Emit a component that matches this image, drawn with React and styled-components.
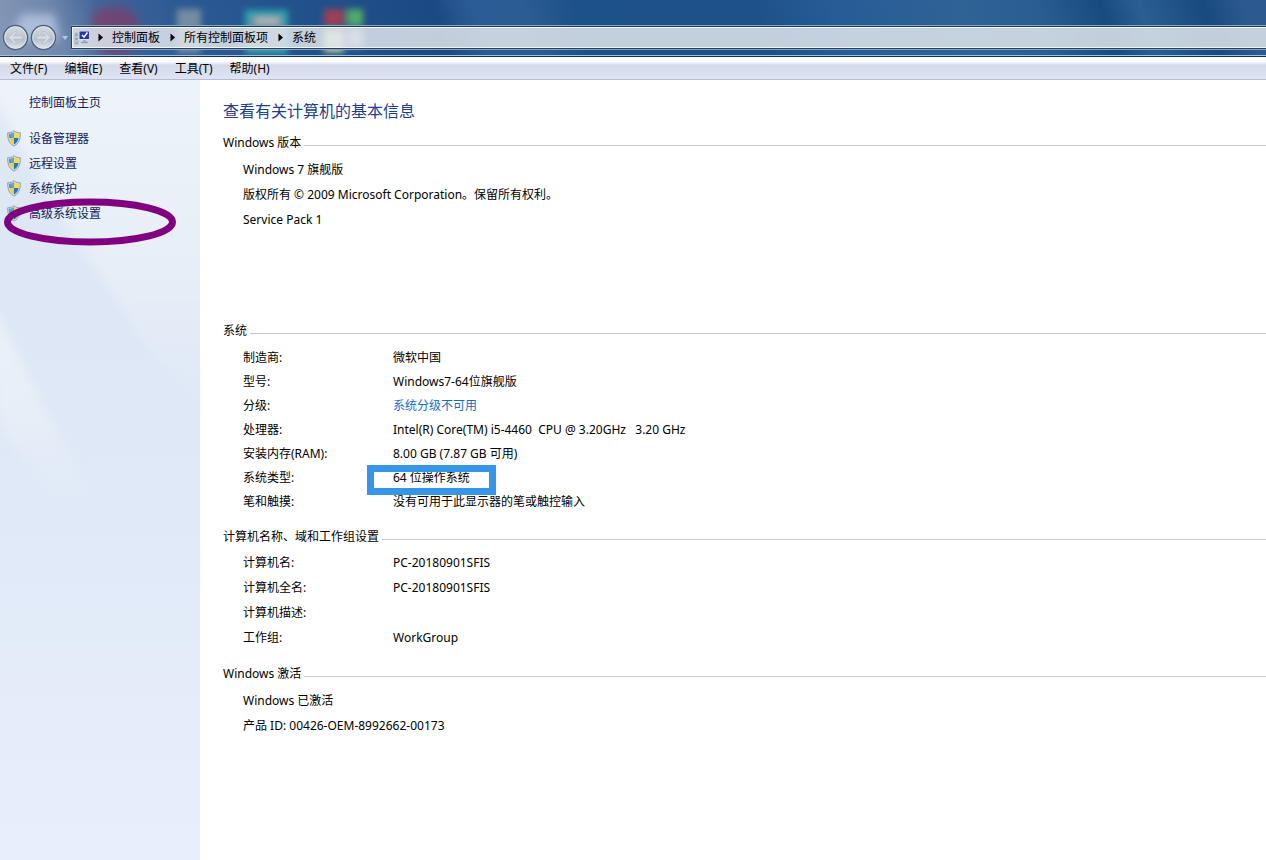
import React from "react";
import styled, { createGlobalStyle } from "styled-components";

const GlobalStyle = createGlobalStyle`
  *, *::before, *::after { box-sizing: border-box; }
  body {
    margin: 0;
    background: #fff;
    color: #000;
    font-family: "Noto Sans", "Noto Sans CJK SC", sans-serif;
    font-size: 12px;
    line-height: 24px;
  }
  button { font: inherit; color: inherit; border: 0; background: none; cursor: pointer; }
  a { text-decoration: none; }
`;

const Window = styled.div`
  display: flex;
  flex-direction: column;
  min-height: 100vh;
`;

const TitleBar = styled.header`
  position: relative;
  display: flex;
  align-items: center;
  height: 57px;
  padding: 19px 0 0 2px;
  overflow: hidden;
  border-bottom: 1px solid #12305a;
  box-shadow: inset 0 -1px #9fc3e2;
  background: linear-gradient(
    72deg,
    #8798b6 0%, #7088ad 5%, #41659a 9%, #2d5a94 15%, #22528c 24%, #1b4984 35%,
    #2c5c95 38%, #2c5c94 42%, #1d5189 46%, #1e5189 60%, #265c97 66%, #2f6396 76%,
    #2a5e92 82%, #184b80 87%, #2b5f94 90%, #18497f 95%, #2c5a90 98%
  );
`;

const Glass = styled.svg`
  position: absolute;
  top: 0;
  left: 0;
`;

const NavButtons = styled.nav`
  position: relative;
  display: flex;
  align-items: center;
  gap: 1px;
  height: 27px;
`;

const NavButton = styled.button`
  display: flex;
  padding: 0;
`;

const RecentButton = styled.button`
  display: flex;
  align-items: center;
  justify-content: center;
  width: 13px;
  height: 26px;
  padding: 0;
`;

const AddressBar = styled.div`
  position: relative;
  flex: 1;
  display: flex;
  align-items: center;
  height: 23px;
  padding-left: 2px;
  border: 1px solid #234163;
  border-right: 0;
  box-shadow:
    inset 1px 0 #edf5f9, inset 0 1px #edf5f9, inset 0 -1px #edf5f9,
    0 -1px #8ba3b8, 0 1px #8ba3b8;
  background: rgba(226, 231, 237, 0.84);
`;

const Location = styled.svg`
  flex: none;
  margin-right: -2px;
`;

const Crumb = styled.button`
  padding: 0;
`;

const CrumbArrow = styled.svg`
  width: 24px;
  height: 9px;
  flex: none;
`;

const MenuBar = styled.nav`
  display: flex;
  gap: 1px;
  height: 23px;
  padding: 0 2px;
  border-bottom: 1px solid #b5bdd2;
  background: linear-gradient(#fff 0, #fff 3px, #f3f4fa 5px, #e4e8f3 7px, #d5daea 8px, #dee4f3 22px);
`;

const MenuItem = styled.button`
  padding: 0 8px;
`;

const Content = styled.div`
  flex: 1;
  display: flex;
`;

const Sidebar = styled.aside`
  position: relative;
  flex: none;
  width: 200px;
  padding: 11px 7px;
  overflow: hidden;
  background: linear-gradient(#dfe9f5, #dde7f5 30%, #e0e9f7 55%, #e4ecfa 75%, #e7effd);
`;

const Beams = styled.svg`
  position: absolute;
  top: 0;
  left: 0;
`;

const SideNav = styled.nav`
  position: relative;
  display: flex;
  flex-direction: column;
`;

const HomeLink = styled.a`
  padding-left: 22px;
  margin-bottom: 11px;
  color: #15215a;
`;

const TaskLink = styled.a`
  position: relative;
  display: flex;
  align-items: center;
  gap: 8px;
  height: 25px;
  color: #15215a;
`;

const EllipseMark = styled.svg`
  position: absolute;
  top: -3px;
  left: -4px;
  pointer-events: none;
`;

const Main = styled.main`
  flex: 1;
  min-width: 0;
  padding: 19px 0 40px 23px;
`;

const PageTitle = styled.h1`
  margin: 0 0 8px;
  font-size: 16px;
  font-weight: 400;
  line-height: 24px;
  color: #1c3f8f;
`;

const Section = styled.section`
  padding-bottom: ${(p) => (p.$roomy ? 87 : 11)}px;
`;

const SectionHeading = styled.h2`
  display: flex;
  align-items: center;
  gap: 3px;
  margin: 0 0 2px;
  font-size: 12px;
  font-weight: 400;
  line-height: 24px;

  &::after {
    content: "";
    flex: 1;
    height: 1px;
    margin-top: 5px;
    background: #c6c9cc;
  }
`;

const Line = styled.p`
  margin: 0;
  padding-left: 20px;
  line-height: 25px;
`;

const Facts = styled.dl`
  display: grid;
  grid-template-columns: 150px 1fr;
  grid-auto-rows: ${(p) => (p.$dense ? 24 : 25)}px;
  margin: 0;
  padding: ${(p) => (p.$dense ? 1 : 0)}px 0 0 20px;
  dd { margin: 0; white-space: pre; }
  a { color: #1a6ac4; }
`;

const Boxed = styled.span`
  position: relative;

  &::after {
    content: "";
    position: absolute;
    top: -4px;
    left: -26px;
    width: 129px;
    height: 30px;
    border: 7px solid #3696e6;
    pointer-events: none;
  }
`;

const menus = ["文件(F)", "编辑(E)", "查看(V)", "工具(T)", "帮助(H)"];
const crumbs = ["控制面板", "所有控制面板项", "系统"];
const tasks = ["设备管理器", "远程设置", "系统保护", "高级系统设置"];

const systemFacts = [
  ["制造商:", "微软中国"],
  ["型号:", "Windows7-64位旗舰版"],
  ["分级:", <a href="#rating">系统分级不可用</a>],
  ["处理器:", "Intel(R) Core(TM) i5-4460  CPU @ 3.20GHz   3.20 GHz"],
  ["安装内存(RAM):", "8.00 GB (7.87 GB 可用)"],
  ["系统类型:", <Boxed>64 位操作系统</Boxed>],
  ["笔和触摸:", "没有可用于此显示器的笔或触控输入"],
];

const networkFacts = [
  ["计算机名:", "PC-20180901SFIS"],
  ["计算机全名:", "PC-20180901SFIS"],
  ["计算机描述:", ""],
  ["工作组:", "WorkGroup"],
];

function DesktopGlow() {
  return (
    <Glass width="400" height="55" aria-hidden="true">
      <defs>
        <filter id="soft" x="-30%" y="-30%" width="160%" height="160%">
          <feGaussianBlur stdDeviation="3" />
        </filter>
        <filter id="softer" x="-40%" y="-40%" width="180%" height="180%">
          <feGaussianBlur stdDeviation="5" />
        </filter>
      </defs>
      <g filter="url(#softer)">
        <path d="M22 14h32l6 26H8z" fill="#b9c8e4" opacity=".8" />
        <path d="M92 14l12-7h22l12 12v22l-12 14h-22l-14-14z" fill="#8a3760" opacity=".65" />
      </g>
      <g filter="url(#soft)">
        <path d="M177 9h24v44h-24z" fill="#8b9da7" opacity=".75" />
        <path d="M248 13h37v38h-37z" fill="#6c8897" stroke="#2ba3ae" strokeWidth="6" />
        <path d="M255 18h24v6h-24z" fill="#b7bcc0" />
        <path d="M324 9h20v17h-20z" fill="#9b3f55" />
        <path d="M347 9h16v17h-16z" fill="#4fab6a" />
        <path d="M324 30h20v22h-20z" fill="#c9d8a0" />
        <path d="M347 30h16v17h-16z" fill="#a9a9cf" />
      </g>
    </Glass>
  );
}

function NavGlyph({ forward }) {
  const id = forward ? "orbF" : "orbB";
  return (
    <svg width="27" height="27" viewBox="0 0 27 27" aria-hidden="true">
      <defs>
        <linearGradient id={id} x2="0" y2="1">
          <stop offset="0" stopColor="#d3dae1" />
          <stop offset=".48" stopColor="#bfc8d1" />
          <stop offset=".56" stopColor="#b3bec9" />
          <stop offset="1" stopColor="#e1e8ec" />
        </linearGradient>
      </defs>
      <circle cx="13.5" cy="13.5" r="12" fill={`url(#${id})`} stroke="#4b617d" strokeWidth="1.4" />
      <circle cx="13.5" cy="13.5" r="10.8" fill="none" stroke="#e6ecf0" strokeOpacity=".8" />
      <path
        d="M6.5 13.5l6-6h2.6l-3.6 4.3h8.8v3.400h-8.800l3.600 4.300h-2.600z"
        fill="#d6dce1"
        stroke="#aeb8c2"
        strokeWidth=".6"
        transform={forward ? "rotate(180 13.5 13.5)" : undefined}
      />
    </svg>
  );
}

function ComputerIcon() {
  return (
    <Location width="16" height="18" viewBox="0 0 16 18" aria-hidden="true">
      <path d="M1 4h3v11H1z" fill="#c5cdd3" stroke="#98a3ac" strokeWidth=".6" />
      <path d="M1.600 6h1.800M1.600 10h1.800" stroke="#64738a" />
      <path d="M1.600 14h2" stroke="#6eb567" />
      <path d="M4.500 2h11v9h-11z" fill="#dfe4ef" />
      <path d="M5.500 2.500h9.500v7.500H5.500z" fill="#1e35b5" />
      <path d="M8 6l2 2 3.500-4.500" fill="none" stroke="#fff" strokeWidth="1.600" />
      <path d="M9 11h3v2H9z" fill="#a9b3c2" />
      <path d="M7 13.500h7" stroke="#8d99aa" strokeWidth="1.200" />
    </Location>
  );
}

function ShieldIcon() {
  return (
    <svg width="14" height="17" viewBox="0 0 14 17" aria-hidden="true">
      <defs>
        <clipPath id="shield">
          <path d="M7 2.200C5.500 3.300 3.800 3.800 2.100 3.800c0 4.800.6 8.200 4.900 10.700 4.300-2.500 4.900-5.900 4.900-10.700-1.700 0-3.400-.5-4.900-1.600z" />
        </clipPath>
      </defs>
      <path
        d="M7 .7C5.200 2.200 3 2.800.7 2.800c0 6 .7 10.200 6.300 13.300 5.600-3.100 6.300-7.300 6.300-13.300C11 2.800 8.800 2.200 7 .7z"
        fill="#d5dde2"
        stroke="#7c8f9d"
        strokeWidth=".8"
      />
      <g clipPath="url(#shield)">
        <path d="M0 0h7v8H0z" fill="#2f80cc" />
        <path d="M7 0h7v8H7z" fill="#f5dc4e" />
        <path d="M0 8h7v9H0z" fill="#f2cf3c" />
        <path d="M7 8h7v9H7z" fill="#2872ba" />
        <path d="M2 3l5-1v6H4z" fill="#8cc4ec" opacity=".5" />
      </g>
    </svg>
  );
}

function SidebarBeams() {
  return (
    <Beams width="200" height="780" aria-hidden="true">
      <defs>
        <linearGradient id="fade" x2="0" y2="1">
          <stop offset="0" stopColor="#f6fafd" stopOpacity=".65" />
          <stop offset=".6" stopColor="#f0f4f8" stopOpacity=".5" />
          <stop offset="1" stopColor="#eef2fc" stopOpacity="0" />
        </linearGradient>
        <filter id="beamBlur" x="-20%" y="-10%" width="140%" height="120%">
          <feGaussianBlur stdDeviation="6" />
        </filter>
      </defs>
      <g fill="url(#fade)" filter="url(#beamBlur)">
        <path d="M-20-20H220V350L150 270L70 150L0 30z" />
        <path d="M-20 200L0 240L45 330L100 430L60 430L0 345z" />
      </g>
    </Beams>
  );
}

function FactList({ items, dense }) {
  return (
    <Facts $dense={dense}>
      {items.map(([label, value]) => (
        <React.Fragment key={label}>
          <dt>{label}</dt>
          <dd>{value}</dd>
        </React.Fragment>
      ))}
    </Facts>
  );
}

export default function App() {
  return (
    <Window>
      <GlobalStyle />
      <TitleBar>
        <DesktopGlow />
        <NavButtons>
          <NavButton type="button" aria-label="后退"><NavGlyph /></NavButton>
          <NavButton type="button" aria-label="前进"><NavGlyph forward /></NavButton>
          <RecentButton type="button" aria-label="最近的页面">
            <svg width="6" height="4" aria-hidden="true"><path d="M0 0h6L3 4z" fill="#a9cbe4" /></svg>
          </RecentButton>
        </NavButtons>
        <AddressBar>
          <ComputerIcon />
          {crumbs.map((c) => (
            <React.Fragment key={c}>
              <CrumbArrow viewBox="0 0 24 9" aria-hidden="true">
                <path d="M10.500 0.500v8l4.500-4z" fill="#000" />
              </CrumbArrow>
              <Crumb type="button">{c}</Crumb>
            </React.Fragment>
          ))}
        </AddressBar>
      </TitleBar>
      <MenuBar>
        {menus.map((m) => <MenuItem type="button" key={m}>{m}</MenuItem>)}
      </MenuBar>
      <Content>
        <Sidebar>
          <SidebarBeams />
          <SideNav>
            <HomeLink href="#home">控制面板主页</HomeLink>
            {tasks.map((t, i) => (
              <TaskLink href={`#task-${i}`} key={t}>
                <ShieldIcon />
                {t}
                {i === tasks.length - 1 && (
                  <EllipseMark width="174" height="48" aria-hidden="true">
                    <ellipse cx="87" cy="24" rx="82.500" ry="20" fill="none" stroke="#800080" strokeWidth="7" />
                  </EllipseMark>
                )}
              </TaskLink>
            ))}
          </SideNav>
        </Sidebar>
        <Main>
          <PageTitle>查看有关计算机的基本信息</PageTitle>
          <Section $roomy>
            <SectionHeading>Windows 版本</SectionHeading>
            <Line>Windows 7 旗舰版</Line>
            <Line>版权所有 © 2009 Microsoft Corporation。保留所有权利。</Line>
            <Line>Service Pack 1</Line>
          </Section>
          <Section>
            <SectionHeading>系统</SectionHeading>
            <FactList items={systemFacts} dense />
          </Section>
          <Section>
            <SectionHeading>计算机名称、域和工作组设置</SectionHeading>
            <FactList items={networkFacts} />
          </Section>
          <Section>
            <SectionHeading>Windows 激活</SectionHeading>
            <Line>Windows 已激活</Line>
            <Line>产品 ID: 00426-OEM-8992662-00173</Line>
          </Section>
        </Main>
      </Content>
    </Window>
  );
}
